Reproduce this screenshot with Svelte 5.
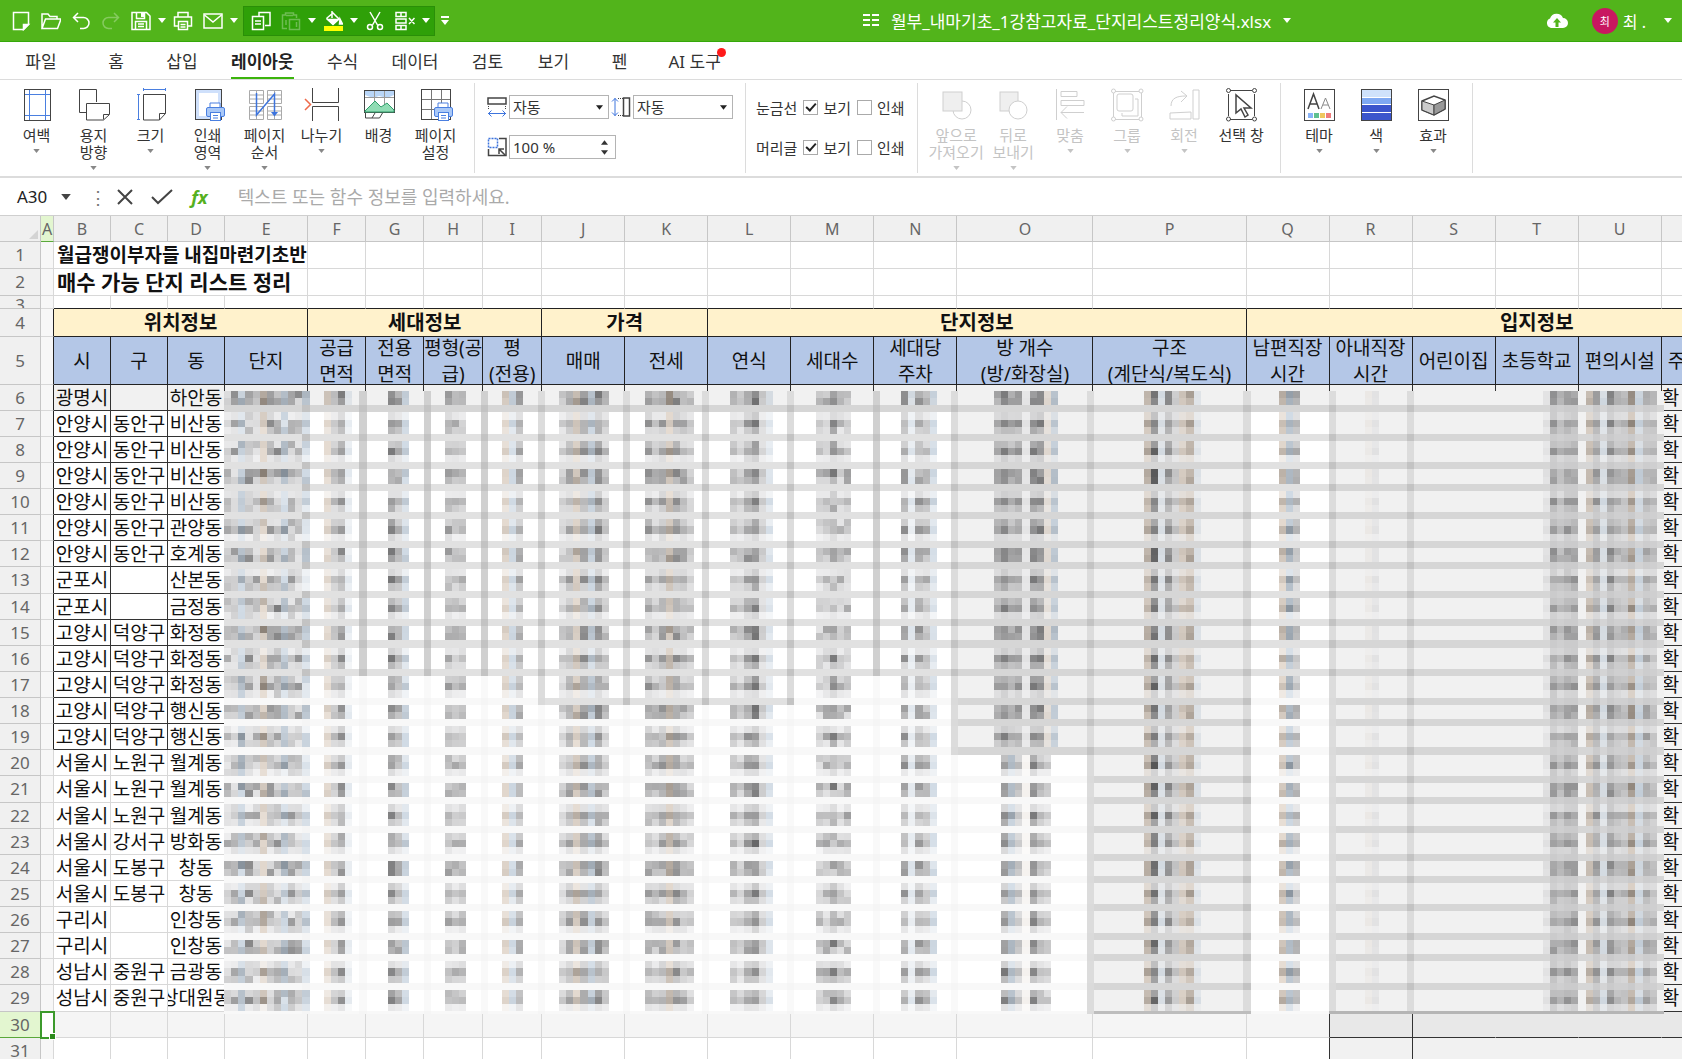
<script>
  const printer =
    '<path d="M19 19v-4h10v4" fill="#fff" stroke="#4a7fe0"/><rect x="15.5" y="19.5" width="18" height="9" rx="1.5" fill="#a9c8f7" stroke="#4a7fe0"/><rect x="19.5" y="24.5" width="10" height="8" fill="#fff" stroke="#4a7fe0"/><path d="M22 27.5h5M22 30h5" stroke="#4a7fe0"/>';

  const quickIcons = {
    new: '<path d="M2.5 1.5h15v12l-5 5h-10z"/><path d="M17.5 13.5h-5v5z" fill="#fff"/>',
    open: '<path d="M1 17.5V3h6l2 2.5h7V8M1 17.5L4.5 8H20l-3.5 9.5z"/>',
    undo: '<path d="M7 2L2.5 6.5 7 11M3 6.5h9.5a5.5 5.5 0 0 1 0 11H9"/>',
    redo: '<path d="M13 2l4.5 4.5L13 11M17 6.5H7.5a5.5 5.5 0 0 0 0 11H11" opacity=".3"/>',
    save: '<path d="M1 1.5h14.5L19 5v13.5H1z"/><path d="M5.5 1.5v6h8v-6M4.5 18.5v-8h11v8M7 13h6M7 15.5h6"/><path d="M10 2h3v4h-3z" fill="#fff" stroke="none"/>',
    print: '<path d="M5 6V1.5h10V6M5 15H1.5V6h17v9H15"/><path d="M5.5 10.5h9v8h-9zM7.5 13.5h5M7.5 16h5"/>',
    mail: '<rect x="1" y="3" width="18" height="14"/><path d="M1.5 4l8.5 7 8.5-7"/>',
    copy: '<path d="M8 5V1.5h11v13h-5"/><rect x="1.5" y="5.5" width="11" height="13"/><path d="M4 10h6M4 13h6"/>',
    paste: '<g opacity=".3"><path d="M6 17.5H1.5V4h3V2h8v2h3v3M5 4.5h7"/><rect x="8.5" y="8.5" width="10" height="10"/><path d="M5 9v5M15.5 11v5"/></g>',
    fill: '<path d="M4 7l6-5 6 6-6 5.5L4 8zM9 0v7"/><path d="M5 8.5h10l-5 4.5zM17 8l2.5 5h-3z" fill="#fff"/><path d="M1 15h19v5H1z" fill="#ff0" stroke="none"/>',
    cut: '<path d="M5 1l7.5 13M15 1L7.5 14"/><circle cx="5" cy="16" r="2.5"/><circle cx="15" cy="16" r="2.5"/>',
    remove: '<path d="M1 1.5h10v4H1zM1 8h10v4H1zM1 14.5h10v4H1zM6 1v4M6 14v5M14 7l5.5 6M19.5 7L14 13"/>',
  };

  const quick = [
    ['new', '새 문서'],
    ['open', '열기'],
    ['undo', '실행 취소'],
    ['redo', '다시 실행'],
    ['save', '저장', true],
    ['print', '인쇄'],
    ['mail', '메일', true],
  ];
  const quickGroup = [
    ['copy', '복사'],
    ['paste', '붙여넣기', true],
    ['fill', '채우기', true],
    ['cut', '오려두기'],
    ['remove', '지우기', true],
  ];

  const tabs = ['파일', '홈', '삽입', '레이아웃', '수식', '데이터', '검토', '보기', '펜', 'AI 도구'];

  const pageTools = [
    {
      label: '여백',
      caret: true,
      icon: '<rect x="4.5" y="1.5" width="26" height="31"/><path d="M9.5 2v30M25.5 2v30M5 6.5h25M5 27.5h25" stroke="#4a7fe0"/>',
    },
    {
      label: '용지\n방향',
      caret: true,
      icon: '<path d="M9 24.5H2.5v-23h17V14"/><path d="M9.5 15.5h23v11l-6 5.5h-17zM32 26.5h-5.5v5"/>',
    },
    {
      label: '크기',
      caret: true,
      icon: '<path d="M9.5 6.5h22v19l-6 6.5h-16zM31.5 25.5h-6V32"/><path d="M9.5 1.5h22M9.5 0v3M31.5 0v3M4.5 6v26M3 6.5h3M3 31.5h3" stroke="#4a7fe0"/>',
    },
    {
      label: '인쇄\n영역',
      caret: true,
      icon: '<rect x="4.5" y="1.5" width="26" height="30" fill="#cfe0fb"/><path d="M8 5h19v23H8z" fill="#fff" stroke="none"/>' + printer,
    },
    {
      label: '페이지\n순서',
      caret: true,
      icon: '<path d="M1.5 2.5h14v13h-14zM19.5 2.5h14v13h-14zM1.5 18.5h14v13h-14zM19.5 18.5h14v13h-14zM1.5 7h14M1.5 11h14M19.5 7h14M19.5 11h14M1.5 23h14M1.5 27h14M19.5 23h14M19.5 27h14M8.5 2v29M26.5 2v29" stroke="#aaa"/><path d="M8.5 5v22L26.5 6v20" stroke="#3d74dd" stroke-width="1.5"/><path d="M23 24h7l-3.5 4.5z" fill="#3d74dd" stroke="none"/>',
    },
    {
      label: '나누기',
      caret: true,
      icon: '<path d="M7.5 0v14.5h26V0M7.5 33V18.5h26V33"/><path d="M0 11l5.5 5.5L0 22" stroke="#ee6a4a" stroke-width="1.5"/>',
    },
    {
      label: '배경',
      icon: '<rect x="2.5" y="2.5" width="30" height="22"/><path d="M3 3h29v4l-7 3-8-2-6 2-8-3z" fill="#b9d6f8" stroke="none"/><path d="M12.5 3v21M22.5 3v21M3 9.5h29" stroke="#999"/><path d="M3 23l10-10 6 6 6-4 7 7v2H3z" fill="#8fdcb4" stroke="#2f9d6a"/><path d="M3.5 25v5h14l3-5M10 30l3-5"/>',
    },
    {
      label: '페이지\n설정',
      icon: '<rect x="2.5" y="1.5" width="29" height="30"/><path d="M12.5 2v29M22.5 2v29M3 11.5h28M3 21.5h28" stroke="#777"/>' + printer,
    },
  ];

  const objectTools = [
    { label: '앞으로\n가져오기', caret: true, off: true, icon: '<circle cx="23" cy="22" r="9"/><rect x="4" y="4" width="19" height="19" fill="#efefef"/>' },
    { label: '뒤로\n보내기', caret: true, off: true, icon: '<rect x="4" y="4" width="18" height="19" fill="#efefef"/><circle cx="22" cy="22" r="9" fill="#fff"/>' },
    { label: '맞춤', caret: true, off: true, icon: '<path d="M3.5 1v31M8 3.5h16v5H8zM8 12.5h23v5H8zM31 24.5H8M14 18.5l-6 6 6 6"/>' },
    { label: '그룹', caret: true, off: true, icon: '<path d="M5 3.5h24M5 31.5h24M3.5 5v24M31.5 5v24"/><rect x="7" y="6" width="16" height="17" rx="2"/><path d="M25 11h3v17H12v-3"/><circle cx="3.5" cy="3" r="2"/><circle cx="31" cy="3" r="2"/><circle cx="3.5" cy="31" r="2"/><circle cx="31" cy="31" r="2"/>' },
    { label: '회전', caret: true, off: true, icon: '<path d="M26 2h6v29h-6zM3 31v-6l21-1v7zM4 18C4 10 10 8 19 8M14 3l6 5-6 6"/>' },
    { label: '선택 창', icon: '<path d="M6 2.5h22M6 31.5h22M4.5 6v22M30.5 6v22"/><path d="M12 7v18l5-4 4 8 3-2-4-7h7z" fill="#fff" stroke-width="1.5"/><circle cx="4.5" cy="2.5" r="2"/><circle cx="30.5" cy="2.5" r="2"/><circle cx="4.5" cy="31" r="2"/><circle cx="30.5" cy="31" r="2"/>' },
  ];

  const themeTools = [
    {
      label: '테마',
      caret: true,
      icon: '<rect x="2.5" y="1.5" width="30" height="31"/><path d="M6 21L11.5 6 17 21M8 16h7" stroke-width="1.5"/><path d="M19 21l4.5-11L28 21M21 17h5" stroke="#888"/><path d="M6 25h5v5H6z" fill="#8ab4f8" stroke="none"/><path d="M12 25h5v5h-5z" fill="#5fc08f" stroke="none"/><path d="M18 25h5v5h-5z" fill="#efc75e" stroke="none"/><path d="M24 25h5v5h-5z" fill="#ef7b7b" stroke="none"/>',
    },
    {
      label: '색',
      caret: true,
      icon: '<path d="M3 2h29v7H3z" fill="#cfe2fb" stroke="none"/><path d="M3 10h29v6H3z" fill="#7fa9f2" stroke="none"/><path d="M3 17h29v7H3zM3 25h29v7H3z" fill="#3b55cc" stroke="none"/><path d="M3 9.5h29M3 16.5h29M3 24.5h29" stroke="#fff"/><rect x="2.5" y="1.5" width="30" height="31"/>',
    },
    {
      label: '효과',
      caret: true,
      icon: '<rect x="2.5" y="1.5" width="30" height="31"/><path d="M6 13l12-5 11 4v9l-11 6-12-5z" fill="#fff" stroke-width="1.5"/><path d="M6 13l12 4v10L6 22z" fill="#ccc"/><path d="M18 17l11-5v9l-11 6z" fill="#999"/>',
    },
  ];

  const columns = [
    ['A', 13], ['B', 57], ['C', 57], ['D', 57], ['E', 83], ['F', 58], ['G', 58], ['H', 59], ['I', 59],
    ['J', 83], ['K', 83], ['L', 83], ['M', 83], ['N', 83], ['O', 136], ['P', 153], ['Q', 83], ['R', 83],
    ['S', 83], ['T', 83], ['U', 83], ['V', 83], ['W', 83],
  ];
  const letters = columns.map((c) => c[0]);

  const groups = [
    ['위치정보', 4],
    ['세대정보', 4],
    ['가격', 2],
    ['단지정보', 5],
    ['입지정보', 7],
  ];

  const fields = [
    '시', '구', '동', '단지', '공급\n면적', '전용\n면적', '평형(공\n급)', '평\n(전용)', '매매', '전세', '연식', '세대수',
    '세대당\n주차', '방 개수\n(방/화장실)', '구조\n(계단식/복도식)', '남편직장\n시간', '아내직장\n시간', '어린이집', '초등학교', '편의시설', '주', '',
  ];

  const places = [
    ['광명시', '', '하안동'],
    ['안양시', '동안구', '비산동'],
    ['안양시', '동안구', '비산동'],
    ['안양시', '동안구', '비산동'],
    ['안양시', '동안구', '비산동'],
    ['안양시', '동안구', '관양동'],
    ['안양시', '동안구', '호계동'],
    ['군포시', '', '산본동'],
    ['군포시', '', '금정동'],
    ['고양시', '덕양구', '화정동'],
    ['고양시', '덕양구', '화정동'],
    ['고양시', '덕양구', '화정동'],
    ['고양시', '덕양구', '행신동'],
    ['고양시', '덕양구', '행신동'],
    ['서울시', '노원구', '월계동'],
    ['서울시', '노원구', '월계동'],
    ['서울시', '노원구', '월계동'],
    ['서울시', '강서구', '방화동'],
    ['서울시', '도봉구', '창동'],
    ['서울시', '도봉구', '창동'],
    ['구리시', '', '인창동'],
    ['구리시', '', '인창동'],
    ['성남시', '중원구', '금광동'],
    ['성남시', '중원구', '상대원동'],
  ];

  // Redaction mosaic over E6:U29, measured in tiles.
  const TILE = 7.13;
  const ROW = 26.13;
  const rowCount = places.length;

  // from, to (tile of the right border), last row with a dark bottom, last row with a dark right side, grey fill
  const areas = [
    [0, 11, 10, 10], [12, 19, 10, 10], [20, 28, 10, 10], [29, 36, 10, 10], [37, 44, 10, 11],
    [45, 56, 11, 11], [57, 67, 11, 11], [68, 79, 11, 11], [80, 91, 10, 10], [92, 102, 10, 13],
    [103, 121, 13, 23, true], [122, 143, 23, 23, true], [144, 155, 10, 23],
    [156, 166, 23, 23, true], [167, 201, 23, -1, true],
  ];

  // first tile, darkness of each tile, tints (b = bluish, w = warm), and how evenly it fills the row
  const smudges = [
    { at: 0, ink: [36, 40, 44, 46, 40, 48, 44, 50, 42, 46, 40, 26], tint: '..b..w..b..b', rough: 1.2, fill: 0.4 },
    { at: 14, ink: [24, 34, 56, 10], tint: 'w..b', rough: 0.6 },
    { at: 23, ink: [62, 46, 26], tint: '..b', rough: 0.6 },
    { at: 31, ink: [46, 38, 38], tint: '...', rough: 0.7 },
    { at: 39, ink: [26, 22, 46], tint: 'wb.', rough: 0.4 },
    { at: 47, ink: [28, 48, 42, 56, 38, 62, 38], tint: '..w.b..', rough: 0.6 },
    { at: 59, ink: [50, 38, 50, 50, 54, 44, 32], tint: '...w...', rough: 0.7 },
    { at: 71, ink: [38, 28, 56, 72, 26, 16], tint: '.....b', rough: 0.5 },
    { at: 83, ink: [32, 38, 56, 34, 38], tint: '.....', rough: 1 },
    { at: 95, ink: [52, 12, 50, 40, 20], tint: '.b..b', rough: 0.6 },
    { at: 108, ink: [44, 60, 44, 50, 8, 62, 62, 14, 28], tint: '.......wb', rough: 0.4, rows: [0, 13] },
    { at: 109, ink: [66, 44, 34, 6, 66, 40, 30], tint: '.b.w...', rough: 0.4, rows: [14, 23] },
    { at: 129, ink: [40, 78, 12, 56, 26, 28, 44, 10], tint: 'w.b..wwb', rough: 0.4, fill: 0.15 },
    { at: 148, ink: [40, 50, 40], tint: 'wb.', rough: 0.5 },
    { at: 160, ink: [5, 9], tint: 'w.', rough: 0.1 },
    { at: 185, ink: [10, 50, 36, 50, 50], tint: '.....', rough: 0.4, fill: 0.4 },
    { at: 191, ink: [36, 50, 14, 56, 36, 34, 54, 20, 42, 34], tint: 'w.b...wb..', rough: 0.4, fill: 0.35 },
  ];

  const bandOf = (r) => Math.floor((ROW * (r + 1) - 6) / TILE);

  function noise(x, y) {
    const n = Math.sin(x * 12.9898 + y * 78.233) * 43758.5453;
    return n - Math.floor(n);
  }

  function shade(base, ink, tint) {
    const v = Math.round(base - ink * 1.7);
    const t = Math.round(Math.min(10, ink / 2));
    if (tint === 'b') return `rgb(${v - t}, ${v}, ${v + t})`;
    if (tint === 'w') return `rgb(${v + t}, ${v}, ${v - t})`;
    return `rgb(${v}, ${v}, ${v + 1})`;
  }

  function buildMosaic() {
    const rects = [];
    const put = (x, y, w, h, fill) => rects.push({ x, y, w, h, fill });

    for (let r = 0; r < rowCount; r++) {
      const top = r === 0 ? 0 : bandOf(r - 1) + 1;
      const band = bandOf(r);
      for (const [from, to, hLast, vLast, grey] of areas) {
        const filled = r === 0 || (grey && r <= hLast);
        put(from, top, to - from + 1, band - top, filled ? '#f1f1f1' : '#fff');
        put(from, band, to - from + 1, 1, filled ? '#d6d6d6' : r <= hLast ? '#e1e1e1' : '#f8f8f8');
        if (vLast >= 0) {
          put(to, top, 1, band - top, r <= vLast ? (vLast === 10 ? '#d0d0d0' : '#dcdcdc') : '#f9f9f9');
          put(to, band, 1, 1, r <= hLast ? '#c3c3c3' : r <= vLast ? '#dadada' : '#f5f5f5');
        }
      }

      for (const s of smudges) {
        if (s.rows && (r < s.rows[0] || r > s.rows[1])) continue;
        const grey = r === 0 || (s.at > 107 && s.at < 140 && (s.at > 120 || r < 14)) || s.at > 155;
        for (let y = top; y < band; y++) {
          const start = Math.max(y * TILE, ROW * r);
          const end = Math.min((y + 1) * TILE, ROW * r + 14);
          const cover = Math.max(s.fill ?? 0, (end - start) / TILE, 0);
          if (cover < 0.08) continue;
          s.ink.forEach((ink, i) => {
            const vary = 1 + s.rough * (noise(s.at + i, y) - 0.55);
            put(s.at + i, y, 1, 1, shade(grey ? 241 : 252, ink * cover * vary, s.tint[i]));
          });
        }
        if (s.at > 180) {
          s.ink.forEach((ink, i) => i && put(s.at + i, band, 1, 1, shade(216, ink * 0.15, '.')));
        }
      }
    }

    // lower edge of the filled columns
    put(122, 87, 22, 1, '#bdbdbd');
    put(155, 87, 47, 1, '#b5b5b5');
    return rects;
  }

  const mosaic = buildMosaic();

  let activeTab = $state('레이아웃');
  let formula = $state('');
</script>

{#snippet caret(cls)}
  <svg class="caret {cls}" viewBox="0 0 8 5" aria-hidden="true"><path d="M0 0h8L4 5z" /></svg>
{/snippet}

{#snippet quickButton([name, title, more])}
  <button class="quick-btn" aria-label={title}>
    <svg width="20" height="20" viewBox="0 0 20 20" fill="none" stroke="#fff" stroke-width="1.5">{@html quickIcons[name]}</svg>
  </button>
  {#if more}
    <button class="more" aria-label="{title} 옵션">{@render caret('')}</button>
  {/if}
{/snippet}

{#snippet tool(t)}
  <button class="tool" class:off={t.off} disabled={t.off}>
    <svg width="34" height="34" viewBox="0 0 34 34" fill="none" stroke={t.off ? '#cfcfcf' : '#444'}>{@html t.icon}</svg>
    <span>{t.label}</span>
    {#if t.caret}{@render caret('small')}{/if}
  </button>
{/snippet}

<div class="app">
  <header class="titlebar">
    <div class="quick">
      {#each quick as q}{@render quickButton(q)}{/each}
      <div class="quick-group">
        {#each quickGroup as q}{@render quickButton(q)}{/each}
      </div>
      <button class="more" aria-label="도구 모음 사용자 지정">
        <svg width="8" height="9" viewBox="0 0 8 9"><path d="M0 0h8v2H0zM0 4h8L4 9z" fill="#fff" /></svg>
      </button>
    </div>
    <div class="doc">
      <svg width="16" height="13" viewBox="0 0 16 13" fill="#fff">
        <path d="M0 0h7v2H0zM9 0h7v2H9zM0 5h7v2H0zM9 5h7v2H9zM0 10h7v2H0zM9 10h7v2H9z" />
      </svg>
      <span>월부_내마기초_1강참고자료_단지리스트정리양식.xlsx</span>
      {@render caret('')}
    </div>
    <div class="account">
      <svg width="22" height="17" viewBox="0 0 22 17">
        <path d="M5 16a5 5 0 0 1-1-9.5A7 7 0 0 1 17 6a5 5 0 0 1 0 10z" fill="#fff" />
        <path d="M11 6l-4 4.5h2.5V15h3v-4.5H15z" fill="#52b41b" />
      </svg>
      <span class="avatar">최</span>
      <span class="user">최 .</span>
      {@render caret('')}
    </div>
  </header>

  <nav class="tabs">
    {#each tabs as tab}
      <button class="tab" class:active={tab === activeTab} onclick={() => (activeTab = tab)}>
        <span>{tab}{#if tab === 'AI 도구'}<i class="dot"></i>{/if}</span>
      </button>
    {/each}
  </nav>

  <section class="ribbon">
    <div class="group page">
      {#each pageTools as t}{@render tool(t)}{/each}
    </div>
    <div class="group scale">
      <div class="line">
        <label for="fit-width" aria-label="너비">
          <svg width="20" height="20" viewBox="0 0 20 20" fill="none" stroke="#444">
            <rect x="1" y="1" width="18" height="6" stroke-width="1.5" />
            <path d="M1.5 9v4M18.5 9v4" stroke-dasharray="1 1" />
            <path d="M1 16.5h18M4.5 13.5l-3 3 3 3M15.5 13.5l3 3-3 3" stroke="#3d74dd" />
          </svg>
        </label>
        <span class="select"><select id="fit-width"><option>자동</option></select>{@render caret('')}</span>
        <label for="fit-height" aria-label="높이">
          <svg width="20" height="20" viewBox="0 0 20 20" fill="none" stroke="#444">
            <rect x="12.5" y="1" width="6" height="18" stroke-width="1.5" />
            <path d="M7 1.5h5M7 18.5h5" stroke-dasharray="1 1" />
            <path d="M4 1v18M1 4.5l3-3 3 3M1 15.5l3 3 3-3" stroke="#3d74dd" />
          </svg>
        </label>
        <span class="select"><select id="fit-height"><option>자동</option></select>{@render caret('')}</span>
      </div>
      <div class="line">
        <label for="zoom" aria-label="배율">
          <svg width="20" height="20" viewBox="0 0 20 20" fill="none" stroke="#444">
            <path d="M12 1.5h7v17H1.5V12" stroke-width="1.5" />
            <rect x="1.5" y="1.5" width="9" height="9" stroke="#3d74dd" stroke-width="1.5" stroke-dasharray="2 1" />
            <path d="M18 18l-6-6M12 17v-5h5" stroke-width="1.5" />
          </svg>
        </label>
        <span class="spin">
          <input id="zoom" type="text" value="100 %" />
          <span class="arrows">
            <button class="up" aria-label="늘리기">{@render caret('')}</button>
            <button aria-label="줄이기">{@render caret('')}</button>
          </span>
        </span>
      </div>
    </div>
    <div class="group checks">
      {#each ['눈금선', '머리글'] as name}
        <div class="line">
          <span>{name}</span>
          <label><input type="checkbox" checked />보기</label>
          <label><input type="checkbox" />인쇄</label>
        </div>
      {/each}
    </div>
    <div class="group objects">
      {#each objectTools as t}{@render tool(t)}{/each}
    </div>
    <div class="group theme">
      {#each themeTools as t}{@render tool(t)}{/each}
    </div>
  </section>

  <div class="formula">
    <button class="name-box">A30{@render caret('')}</button>
    <span class="grip">⋮</span>
    <button aria-label="취소">
      <svg width="16" height="16" viewBox="0 0 16 16" fill="none" stroke="#444" stroke-width="2"><path d="M1 1l14 14M15 1L1 15" /></svg>
    </button>
    <button aria-label="입력">
      <svg width="22" height="16" viewBox="0 0 22 16" fill="none" stroke="#444" stroke-width="2"><path d="M1 8l6 6L21 1" /></svg>
    </button>
    <button class="fx">fx</button>
    <input type="text" aria-label="수식" placeholder="텍스트 또는 함수 정보를 입력하세요." bind:value={formula} />
  </div>

  <main class="sheet">
    <table>
      <colgroup>
        <col style:width="41px" />
        {#each columns as [, width]}<col style:width="{width}px" />{/each}
      </colgroup>
      <thead>
        <tr>
          <th class="corner"><svg width="9" height="9" viewBox="0 0 9 9"><path d="M9 0v9H0z" fill="#d4d4d4" /></svg></th>
          {#each letters as letter}<th class:current={letter === 'A'}>{letter}</th>{/each}
        </tr>
      </thead>
      <tbody>
        <tr class="r1">
          <th>1</th>
          <td></td>
          <td class="title" colspan="4">월급쟁이부자들 내집마련기초반</td>
          {#each letters.slice(5) as _}<td></td>{/each}
        </tr>
        <tr class="r2">
          <th>2</th>
          <td></td>
          <td class="title big" colspan="4">매수 가능 단지 리스트 정리</td>
          {#each letters.slice(5) as _}<td></td>{/each}
        </tr>
        <tr class="r3">
          <th><span>3</span></th>
          {#each letters as _, i}<td class:over={i > 0}></td>{/each}
        </tr>
        <tr class="r4">
          <th>4</th>
          <td class="before"></td>
          {#each groups as [name, span]}<td class="band" colspan={span}>{name}</td>{/each}
        </tr>
        <tr class="r5">
          <th>5</th>
          <td class="before"></td>
          {#each fields as name}<td class="field" class:cut={name === '주'}><span>{name}</span></td>{/each}
        </tr>
        {#each places as [city, district, town], i}
          <tr class="data" class:lined={i < 14} class:first={i === 0} class:tall={i % 8 === 7}>
            <th>{i + 6}</th>
            <td></td>
            <td class="place">{city}</td>
            <td class="place">{district}</td>
            <td class="place"><span>{town}</span></td>
            {#each letters.slice(4, 21) as _}<td></td>{/each}
            <td class="note">확</td>
            <td class="note"></td>
          </tr>
        {/each}
        <tr class="r30">
          <th class="current">30</th>
          {#each letters as _, i}<td class:cell={i === 0} class:edge={i === 16 || i === 17} class:dark={i > 16}></td>{/each}
        </tr>
        <tr class="r31">
          <th>31</th>
          {#each letters as _, i}<td class:edge={i === 16 || i === 17} class:dark={i > 16}></td>{/each}
        </tr>
      </tbody>
    </table>
    <svg class="mosaic" viewBox="0 0 202 87.4" preserveAspectRatio="none" shape-rendering="crispEdges" aria-hidden="true">
      {#each mosaic as m}<rect x={m.x} y={m.y} width={m.w} height={m.h} fill={m.fill} />{/each}
    </svg>
  </main>
</div>

<style>
  :global(body) {
    overflow: hidden;
  }

  .app {
    height: 100vh;
    overflow: hidden;
    display: flex;
    flex-direction: column;
    background: #fff;
    color: #333;
    font-family: "Noto Sans", "Noto Sans CJK KR", sans-serif;
    font-size: 15px;
  }

  button {
    padding: 0;
    border: 0;
    background: none;
    font: inherit;
    color: inherit;
  }

  .caret {
    width: 8px;
    height: 5px;
    flex: none;
    fill: currentColor;
  }

  .caret.small {
    width: 7px;
    height: 4px;
    margin-top: 5px;
    fill: #888;
  }

  .titlebar {
    flex: none;
    display: flex;
    align-items: center;
    height: 41px;
    padding: 0 10px 0 6px;
    background: #52b41b;
    border-bottom: 1px solid #35a80a;
    color: #fff;
    font-size: 17px;
  }

  .quick,
  .quick-group,
  .doc,
  .account {
    display: flex;
    align-items: center;
  }

  .quick {
    flex: 9 1 0;
  }

  .quick-group {
    height: 28px;
    margin: 0 4px 0 3px;
    padding: 0 2px;
    background: #2fa008;
    border: 1px solid #2a8f08;
  }

  .quick-btn {
    display: flex;
    justify-content: center;
    width: 30px;
  }

  .more {
    display: flex;
    justify-content: center;
    width: 12px;
  }

  .doc {
    gap: 12px;
    white-space: nowrap;
  }

  .account {
    flex: 4 1 0;
    justify-content: flex-end;
  }

  .avatar {
    display: flex;
    align-items: center;
    justify-content: center;
    width: 26px;
    height: 26px;
    margin: 0 5px 0 24px;
    border-radius: 50%;
    background: #c81860;
    font-size: 11px;
  }

  .user {
    margin-right: 18px;
    font-size: 16px;
  }

  .tabs {
    flex: none;
    display: flex;
    height: 37px;
    padding-left: 8px;
    border-bottom: 1px solid #dcdcdc;
    font-size: 17px;
  }

  .tab {
    min-width: 66px;
    padding: 0 21px;
  }

  .tab:first-child {
    margin-right: 9px;
  }

  .tab span {
    position: relative;
    display: flex;
    align-items: center;
    justify-content: center;
    height: 37px;
    margin: 0 -5px;
    white-space: pre;
  }

  .tab.active span {
    font-weight: 700;
    color: #222;
    box-shadow: 0 -2px 0 #3cb40c inset;
  }

  .dot {
    position: absolute;
    top: 6px;
    right: -5px;
    width: 9px;
    height: 9px;
    border-radius: 50%;
    background: #ff1a1a;
  }

  .ribbon {
    flex: none;
    display: flex;
    height: 96px;
    border-bottom: 2px solid #dcdcdc;
  }

  .group {
    display: flex;
    margin: 3px 0;
    padding: 5px 10px;
    border-right: 1px solid #dcdcdc;
  }

  .group.page {
    padding-left: 8px;
  }

  .tool {
    display: flex;
    flex-direction: column;
    align-items: center;
    width: 57px;
  }

  .tool svg:first-child {
    overflow: visible;
  }

  .tool span {
    margin-top: 5px;
    line-height: 17px;
    white-space: pre;
  }

  .tool.off {
    color: #c4c4c4;
  }

  .tool.off .caret {
    fill: #c4c4c4;
  }

  .group.scale,
  .group.checks {
    flex-direction: column;
    gap: 14px;
    padding: 11px 12px 0 10px;
  }

  .line {
    display: flex;
    align-items: center;
    height: 26px;
  }

  .line label {
    display: flex;
    align-items: center;
  }

  .group.scale {
    padding-left: 12px;
  }

  .scale .line {
    gap: 2px;
  }

  .select {
    position: relative;
    display: flex;
  }

  .select .caret {
    position: absolute;
    right: 6px;
    top: 10px;
    width: 7px;
    fill: #222;
  }

  select,
  .spin {
    box-sizing: border-box;
    width: 100px;
    height: 24px;
    padding: 0 3px;
    border: 1px solid #b4b4b4;
    border-radius: 0;
    appearance: none;
    background: #fff;
    color: #333;
    font: inherit;
  }

  .spin {
    display: flex;
    align-items: center;
    width: 107px;
  }

  .spin input {
    min-width: 0;
    flex: 1;
    padding: 0;
    border: 0;
    font: inherit;
    color: inherit;
  }

  .arrows {
    display: flex;
    flex-direction: column;
    gap: 5px;
    margin-right: 4px;
  }

  .arrows button {
    display: flex;
  }

  .arrows .caret {
    width: 7px;
  }

  .arrows .up {
    transform: rotate(180deg);
  }

  .checks .line {
    gap: 6px;
  }

  .checks label {
    gap: 5px;
  }

  .checks input {
    display: flex;
    justify-content: center;
    width: 15px;
    height: 15px;
    margin: 0;
    border: 1px solid #aaa;
    appearance: none;
    background: #fff;
  }

  .checks input:checked::after {
    content: "";
    width: 4px;
    height: 8px;
    border: solid #222;
    border-width: 0 2px 2px 0;
    transform: rotate(42deg);
  }

  .formula {
    flex: none;
    display: flex;
    align-items: center;
    gap: 18px;
    height: 37px;
    padding-left: 17px;
    border-bottom: 1px solid #cfcfcf;
    font-size: 18px;
  }

  .formula button {
    display: flex;
    align-items: center;
  }

  .formula .name-box {
    gap: 14px;
    color: #222;
    font-size: 17px;
  }

  .name-box .caret {
    width: 10px;
    height: 6px;
    fill: #444;
  }

  .grip {
    width: 10px;
    text-align: center;
    color: #777;
  }

  .formula .fx {
    color: #55b020;
    font-weight: 700;
    font-style: italic;
  }

  .formula input {
    flex: 1;
    padding: 0 0 0 12px;
    border: 0;
    font: inherit;
    outline: none;
  }

  .formula input::placeholder {
    color: #aaa;
    opacity: 1;
  }

  .sheet {
    position: relative;
    flex: 1;
    overflow: hidden;
  }

  table {
    width: 1828px;
    table-layout: fixed;
    border-collapse: separate;
    border-spacing: 0;
  }

  th,
  td {
    box-sizing: border-box;
    height: 26px;
    padding: 0;
    overflow: hidden;
    border: solid #d8d8d8;
    border-width: 0 1px 1px 0;
    line-height: 20px;
    white-space: nowrap;
  }

  th {
    background: #f0f0f0;
    border-color: #c6c6c6;
    color: #666;
    font-size: 17px;
    font-weight: 400;
  }

  thead th {
    font-size: 16px;
  }

  .corner {
    text-align: right;
    vertical-align: bottom;
  }

  .corner svg {
    display: block;
    margin: 0 2px 2px auto;
  }

  th.current {
    background: #e3f6d0;
    border-bottom-color: #5aa83a;
  }

  tbody td:nth-child(2) {
    background: #f7f7f7;
  }

  td {
    color: #111;
    font-size: 19px;
    text-align: center;
  }

  .r1 > *,
  .r2 > * {
    height: 27px;
  }

  td.title {
    padding-left: 3px;
    font-weight: 700;
    text-align: left;
  }

  td.title.big {
    font-size: 21px;
  }

  .r3 > * {
    height: 13px;
    line-height: 0;
  }

  .r3 span {
    display: block;
    height: 12px;
    overflow: hidden;
    line-height: 17px;
  }

  .r3 .over {
    border-bottom-color: #222;
  }

  .r4 > * {
    height: 28px;
  }

  .before {
    border-right-color: #222;
  }

  .band {
    background: #fff2cc;
    border-color: #222;
    font-weight: 700;
    font-size: 20px;
  }

  .r5 > * {
    height: 48px;
  }

  .field {
    background: #b4c7e7;
    border-color: #222;
    white-space: pre;
  }

  .field span {
    display: block;
    margin: -3px 0;
    line-height: 26px;
  }

  .cut {
    padding-left: 6px;
    text-align: left;
  }

  .tall > * {
    height: 27px;
  }

  .place span {
    display: flex;
    justify-content: center;
  }

  .lined td:nth-child(2) {
    border-right-color: #222;
  }

  .lined .place,
  .first td:nth-child(n + 6) {
    border-color: #333;
  }

  .first td:nth-child(n + 3) {
    background: #f1f1f1;
  }

  .data .note {
    background: #f4f4f4;
    border-color: #333;
    text-align: left;
  }

  .r30 td {
    background: #f5f5f5;
  }

  .r30 td.cell {
    position: relative;
    overflow: visible;
    background: #fff;
    border: 0;
    outline: 2px solid #3c9a2c;
    outline-offset: -1px;
  }

  .cell::after {
    content: "";
    position: absolute;
    right: -2px;
    bottom: -2px;
    width: 5px;
    height: 5px;
    background: #2c8a1c;
    border: 1px solid #fff;
  }

  .r30 td.dark {
    background: #e8e8e8;
    border-right-color: #e8e8e8;
    border-bottom-color: #333;
  }

  .r31 td.dark {
    background: #f1f1f1;
    border-right-color: #f1f1f1;
  }

  .r30 td.edge,
  .r31 td.edge {
    border-right-color: #333;
  }

  .mosaic {
    position: absolute;
    left: 224px;
    top: 175px;
    width: 1440px;
    height: 623px;
  }
</style>
